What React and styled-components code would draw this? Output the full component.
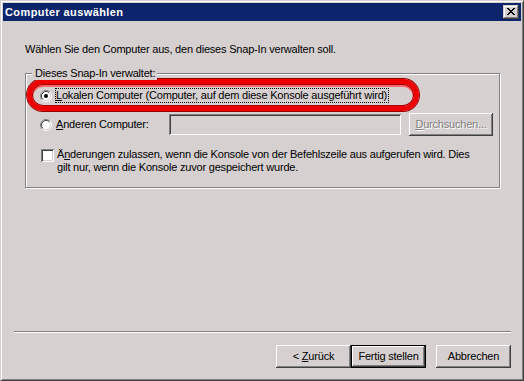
import React from "react";
import styled, { createGlobalStyle } from "styled-components";

const FACE = "#d6d0d0";

const GlobalStyle = createGlobalStyle`
  html, body { margin: 0; padding: 0; background: ${FACE}; }
  body {
    font-family: "Liberation Sans", Arial, sans-serif;
    font-size: 11px;
    color: #000;
  }
`;

const Window = styled.div`
  width: 524px;
  height: 381px;
  box-sizing: border-box;
  border: 1px solid;
  border-color: ${FACE} #404040 #404040 ${FACE};
  box-shadow: inset 1px 1px #fff, inset -1px -1px #808080;
  padding: 2px;
  background: ${FACE};
  display: flex;
  flex-direction: column;
`;

const TitleBar = styled.div`
  height: 18px;
  flex: none;
  background: #0c246c;
  display: flex;
  align-items: center;
  justify-content: space-between;
  padding: 0 2px 0 2px;
`;

const TitleText = styled.span`
  color: #fff;
  font-weight: bold;
  font-size: 11px;
  letter-spacing: 0.4px;
  line-height: 13px;
`;

const CaptionButton = styled.div`
  width: 16px;
  height: 14px;
  box-sizing: border-box;
  background: ${FACE};
  box-shadow: inset -1px -1px #404040, inset 1px 1px ${FACE},
    inset -2px -2px #808080, inset 2px 2px #fff;
  display: flex;
  align-items: center;
  justify-content: center;
  padding: 0 0 1px 0;
`;

const Body = styled.div`
  flex: 1;
  display: flex;
  flex-direction: column;
`;

const Top = styled.div`
  flex: 1;
  padding: 22px 0 0 22px;
`;

const Intro = styled.div`
  line-height: 13px;
  letter-spacing: -0.2px;
`;

const GroupBox = styled.div`
  position: relative;
  margin-top: 17px;
  width: 475px;
  height: 115px;
  box-sizing: border-box;
  border: 1px solid #808080;
  box-shadow: inset 1px 1px #fff, 1px 1px #fff;
  padding: 14px 0 0 14px;
  display: flex;
  flex-direction: column;
`;

const Legend = styled.span`
  position: absolute;
  z-index: 1;
  top: -7px;
  left: 6px;
  padding: 0 2px 0 3px;
  background: ${FACE};
  line-height: 13px;
  letter-spacing: -0.2px;
`;

const Highlight = styled.div`
  position: absolute;
  left: 1px;
  top: 5px;
  width: 392px;
  height: 32px;
  box-sizing: border-box;
  border: 5px solid #ec0000;
  border-radius: 17px;
  box-shadow: 0 0 0 1px #9a0000, inset 0 0 0 1px #a80000,
    inset 0 2px 0 1px #ff6a6a;
  pointer-events: none;
`;

const Row = styled.div`
  display: flex;
  align-items: ${(p) => p.$align || "center"};
  margin-top: ${(p) => p.$gap || 0}px;
`;

const ControlSlot = styled.div`
  width: ${(p) => p.$w || 16}px;
  flex: none;
  display: flex;
  align-items: center;
  margin-top: ${(p) => p.$offset || 0}px;
  padding-left: ${(p) => p.$pl || 0}px;
`;

const Label = styled.span`
  line-height: 13px;
  letter-spacing: -0.2px;
  white-space: nowrap;
  width: ${(p) => (p.$width ? p.$width + "px" : "auto")};
  flex: none;
  border: 1px dotted ${(p) => (p.$focus ? "#000" : "transparent")};
  padding: 0 1px 0 0;
  margin-left: -1px;
`;

const Checkbox = styled.div`
  width: 13px;
  height: 13px;
  box-sizing: border-box;
  background: #fff;
  box-shadow: inset 1px 1px #808080, inset -1px -1px #fff,
    inset 2px 2px #404040, inset -2px -2px ${FACE};
`;

const TextField = styled.div`
  width: 232px;
  height: 21px;
  flex: none;
  background: ${FACE};
  box-shadow: inset 1px 1px #808080, inset -1px -1px #fff,
    inset 2px 2px #404040, inset -2px -2px ${FACE};
`;

const Button = styled.div`
  width: ${(p) => p.$width || 75}px;
  height: 23px;
  flex: none;
  box-sizing: border-box;
  background: ${FACE};
  display: flex;
  align-items: center;
  justify-content: center;
  line-height: 13px;
  letter-spacing: -0.2px;
  margin-left: ${(p) => p.$ml || 0}px;
  border: ${(p) => (p.$default ? "1px solid #000" : "none")};
  box-shadow: inset -1px -1px #404040, inset 1px 1px #fff,
    inset -2px -2px #808080, inset 2px 2px ${FACE};
  color: ${(p) => (p.$disabled ? "#808080" : "#000")};
  text-shadow: ${(p) => (p.$disabled ? "1px 1px #fff" : "none")};
`;

const Separator = styled.div`
  height: 0;
  border-top: 1px solid #808080;
  border-bottom: 1px solid #fff;
  margin: 0 10px 0 11px;
`;

const ButtonBar = styled.div`
  display: flex;
  justify-content: flex-end;
  padding: 12px 10px 10px 0;
`;

const U = styled.span`
  text-decoration: underline;
  text-underline-offset: 1px;
`;

function Radio({ checked }) {
  return (
    <svg width="12" height="12" viewBox="0 0 12 12">
      <circle cx="6" cy="6" r="5" fill="#fff" />
      <path d="M2.11 9.89 A5.5 5.5 0 0 1 9.89 2.11" fill="none" stroke="#808080" />
      <path d="M9.89 2.11 A5.5 5.5 0 0 1 2.11 9.89" fill="none" stroke="#fff" />
      <path d="M2.82 9.18 A4.5 4.5 0 0 1 9.18 2.82" fill="none" stroke="#404040" />
      <path d="M9.18 2.82 A4.5 4.5 0 0 1 2.82 9.18" fill="none" stroke={FACE} />
      {checked && <circle cx="6" cy="6" r="2" fill="#000" />}
    </svg>
  );
}

function CloseGlyph() {
  return (
    <svg width="8" height="7" viewBox="0 0 8 7">
      <path d="M0 0 L7 7 M1 0 L8 7 M7 0 L0 7 M8 0 L1 7" stroke="#000" strokeWidth="1" />
    </svg>
  );
}

export default function App() {
  return (
    <>
      <GlobalStyle />
      <Window>
        <TitleBar>
          <TitleText>Computer auswählen</TitleText>
          <CaptionButton>
            <CloseGlyph />
          </CaptionButton>
        </TitleBar>
        <Body>
          <Top>
            <Intro>Wählen Sie den Computer aus, den dieses Snap-In verwalten soll.</Intro>
            <GroupBox>
              <Legend>Dieses Snap-In verwaltet:</Legend>
              <Row>
                <ControlSlot>
                  <Radio checked />
                </ControlSlot>
                <Label $focus>
                  <U>L</U>okalen Computer (Computer, auf dem diese Konsole ausgeführt wird)
                </Label>
              </Row>
              <Row $gap={10}>
                <ControlSlot>
                  <Radio />
                </ControlSlot>
                <Label $width={111}>
                  <U>A</U>nderen Computer:
                </Label>
                <TextField />
                <Button $width={84} $ml={8} $disabled>
                  <span>
                    <U>D</U>urchsuchen...
                  </span>
                </Button>
              </Row>
              <Row $gap={11} $align="flex-start">
                <ControlSlot $offset={2} $pl={1}>
                  <Checkbox />
                </ControlSlot>
                <Label>
                  Ä<U>n</U>derungen zulassen, wenn die Konsole von der Befehlszeile aus aufgerufen wird. Dies
                  <br />
                  gilt nur, wenn die Konsole zuvor gespeichert wurde.
                </Label>
              </Row>
              <Highlight />
            </GroupBox>
          </Top>
          <Separator />
          <ButtonBar>
            <Button>
              <span>
                &lt; <U>Z</U>urück
              </span>
            </Button>
            <Button $default>Fertig stellen</Button>
            <Button $ml={10}>Abbrechen</Button>
          </ButtonBar>
        </Body>
      </Window>
    </>
  );
}
